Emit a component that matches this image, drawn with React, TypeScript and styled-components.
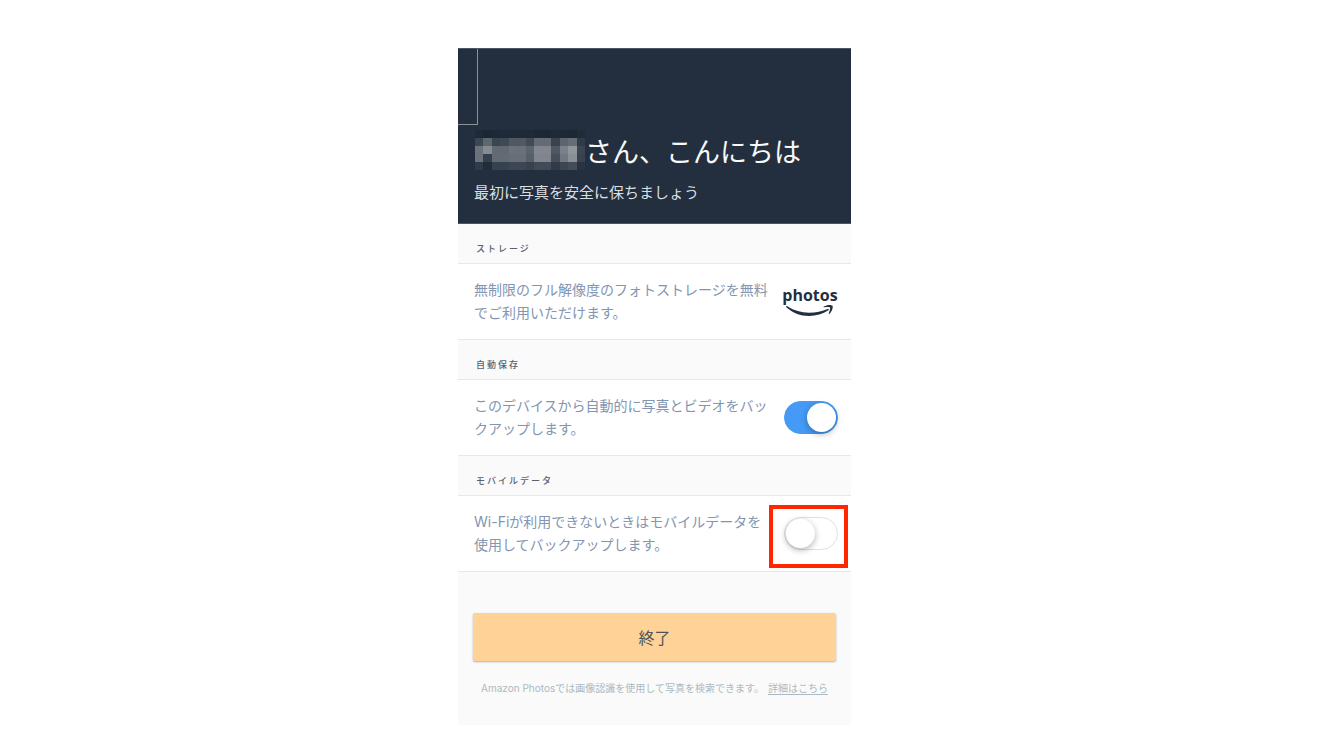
import React, { useState } from "react";
import styled, { createGlobalStyle } from "styled-components";

const GlobalStyle = createGlobalStyle`
  *, *::before, *::after { box-sizing: border-box; }
  body {
    margin: 0;
    background: #ffffff;
    font-family: Inter, "Noto Sans CJK JP", sans-serif;
  }
`;

const Page = styled.main`
  display: flex;
  justify-content: center;
  padding: 48px 11px 16px 0;
`;

const Screen = styled.div`
  width: 100%;
  max-width: 393px;
  background: #fafafa;
`;

const Header = styled.header`
  display: flex;
  flex-direction: column;
  justify-content: space-between;
  background: #232f3e;
  border: 1px solid #4d5763;
  border-width: 1px 0;
  padding-bottom: 18px;
`;

const CornerFrame = styled.div`
  width: 20px;
  height: 76px;
  border: 1px solid #8b929a;
  border-width: 0 1px 1px 0;
`;

const Greeting = styled.h1`
  display: flex;
  align-items: flex-start;
  margin: 5px 0 5px 17px;
  color: #f7f8f8;
  font-size: 27px;
  font-weight: 400;
  line-height: 46px;
  white-space: nowrap;
`;

const Subtitle = styled.p`
  margin: 0 0 0 16px;
  color: #dcdfe2;
  font-size: 15px;
  line-height: 24px;
`;

const SectionTitle = styled.h2`
  margin: 0;
  padding: 16px 18px 5px;
  border-bottom: 1px solid #e8e8e8;
  color: #59626c;
  font-size: 9px;
  font-weight: 500;
  letter-spacing: 2px;
  line-height: 18px;
`;

const Row = styled.div`
  display: flex;
  align-items: center;
  justify-content: space-between;
  padding: 14px 13px 15px 16px;
  background: #ffffff;
  border-bottom: 1px solid #e8e8e8;
`;

const Description = styled.label`
  flex: 0 1 296px;
  margin: 0;
  color: #8395b0;
  font-size: 14px;
  line-height: 23px;
`;

const Brand = styled.div`
  display: flex;
  flex-direction: column;
  align-items: center;
  width: 56px;
  color: #232f3e;
  font-family: "Open Sans", sans-serif;
  font-size: 16px;
  font-weight: 700;
  line-height: 18px;
`;

const ToggleFrame = styled.span`
  position: relative;
  display: flex;
`;

const Highlight = styled.span`
  position: absolute;
  inset: -12px -10px -18px -15px;
  border: 4px solid #ff2600;
  pointer-events: none;
`;

const Toggle = styled.input`
  appearance: none;
  display: flex;
  align-items: center;
  width: 54px;
  height: 33px;
  margin: 0;
  padding: 0 1px;
  border: 1px solid #e0e0e0;
  border-radius: 17px;
  background: #ffffff;
  cursor: pointer;

  &::before {
    content: "";
    width: 29px;
    height: 29px;
    border-radius: 50%;
    background: #ffffff;
    box-shadow: 0 2px 6px rgba(0, 0, 0, 0.3);
  }

  &:checked {
    justify-content: flex-end;
    border-color: #449af5;
    background: #449af5;
  }
`;

const Footer = styled.footer`
  display: flex;
  flex-direction: column;
  padding: 41px 15px 27px;
`;

const FinishButton = styled.button`
  height: 48px;
  border: 0;
  border-radius: 2px;
  background: #ffd297;
  box-shadow: 0 1px 2px rgba(0, 0, 0, 0.3);
  color: #4d5358;
  font-family: inherit;
  font-size: 16px;
  cursor: pointer;
`;

const Note = styled.p`
  margin: 17px 0 0;
  color: #adb9c1;
  font-size: 10px;
  line-height: 20px;
  text-align: center;
`;

const NoteLink = styled.a`
  margin-left: 4px;
  color: inherit;
  text-underline-offset: 2px;
`;

const mosaicRows = [
  "1e2a38 1c2735 1d2937 1e2a38 1e2a38 1e2a38 1e2a38 1c2735 1c2735 1e2a38 1d2836 1c2735 202c3a",
  "3c4752 5e6670 3a4651 3f4a56 4f5863 4f5863 414c58 636b75 636b75 38434f 5c646f 656d77 303b48",
  "6c727b 868a91 636973 636973 6b7079 6a7079 5c636d 82878f 82878f 4e5762 7b818a 91959c 3a4551",
  "6c727b 34404d 646a74 646a74 686e77 686e77 565e68 80858d 80858d 454f5b 727882 8a8e96 38434f",
  "2f3b48 222d3b 36424e 36424e 3c4753 3c4753 36424e 404b57 404b57 303b48 3b4652 434d59 283442",
].map((row) => row.split(" "));

function HiddenName() {
  return (
    <svg width="110" height="40" viewBox="0 0 13 5" preserveAspectRatio="none" shapeRendering="crispEdges" aria-hidden="true">
      {mosaicRows.map((row, y) =>
        row.map((color, x) => (
          <rect key={`${x}-${y}`} x={x} y={y} width="1" height="1" fill={`#${color}`} />
        ))
      )}
    </svg>
  );
}

function Smile() {
  return (
    <svg width="50" height="13" viewBox="0 0 50 13" fill="#232f3e" aria-hidden="true">
      <path d="M1.2 2.6 C1.5 2 2 2 2.7 2.4 C9 6.4 16 8.6 24 8.7 C31 8.7 37.3 7.4 42.6 5 C43.8 4.6 44.4 5.5 43.4 6.3 C37.7 10.2 31 12 24.2 12 C15 12 7.4 8.6 1.6 3.5 C1.2 3.1 1 2.9 1.2 2.6 Z" />
      <path d="M38.8 2.6 C41.6 .6 46.2 .5 47.4 1.6 C48.4 2.9 47.2 7.4 44.6 9.8 C44 10.3 43.5 9.9 43.8 9.2 C44.6 7.2 45.6 4.5 45 3.6 C44.3 2.8 41.4 3.1 39.4 3.3 C38.6 3.4 38.2 3.1 38.8 2.6 Z" />
    </svg>
  );
}

export default function App() {
  const [autoSave, setAutoSave] = useState(true);
  const [mobileData, setMobileData] = useState(false);

  return (
    <>
      <GlobalStyle />
      <Page lang="ja">
        <Screen>
          <Header>
            <CornerFrame />
            <Greeting>
              <HiddenName />
              さん、こんにちは
            </Greeting>
            <Subtitle>最初に写真を安全に保ちましょう</Subtitle>
          </Header>

          <section>
            <SectionTitle>ストレージ</SectionTitle>
            <Row>
              <Description as="p">
                無制限のフル解像度のフォトストレージを無料でご利用いただけます。
              </Description>
              <Brand>
                photos
                <Smile />
              </Brand>
            </Row>
          </section>

          <section>
            <SectionTitle>自動保存</SectionTitle>
            <Row>
              <Description htmlFor="auto-save">
                このデバイスから自動的に写真とビデオをバックアップします。
              </Description>
              <ToggleFrame>
                <Toggle
                  id="auto-save"
                  type="checkbox"
                  role="switch"
                  checked={autoSave}
                  onChange={(e) => setAutoSave(e.target.checked)}
                />
              </ToggleFrame>
            </Row>
          </section>

          <section>
            <SectionTitle>モバイルデータ</SectionTitle>
            <Row>
              <Description htmlFor="mobile-data">
                Wi-Fiが利用できないときはモバイルデータを使用してバックアップします。
              </Description>
              <ToggleFrame>
                <Toggle
                  id="mobile-data"
                  type="checkbox"
                  role="switch"
                  checked={mobileData}
                  onChange={(e) => setMobileData(e.target.checked)}
                />
                <Highlight />
              </ToggleFrame>
            </Row>
          </section>

          <Footer>
            <FinishButton type="button">終了</FinishButton>
            <Note>
              Amazon Photosでは画像認識を使用して写真を検索できます。
              <NoteLink href="#details">詳細はこちら</NoteLink>
            </Note>
          </Footer>
        </Screen>
      </Page>
    </>
  );
}
